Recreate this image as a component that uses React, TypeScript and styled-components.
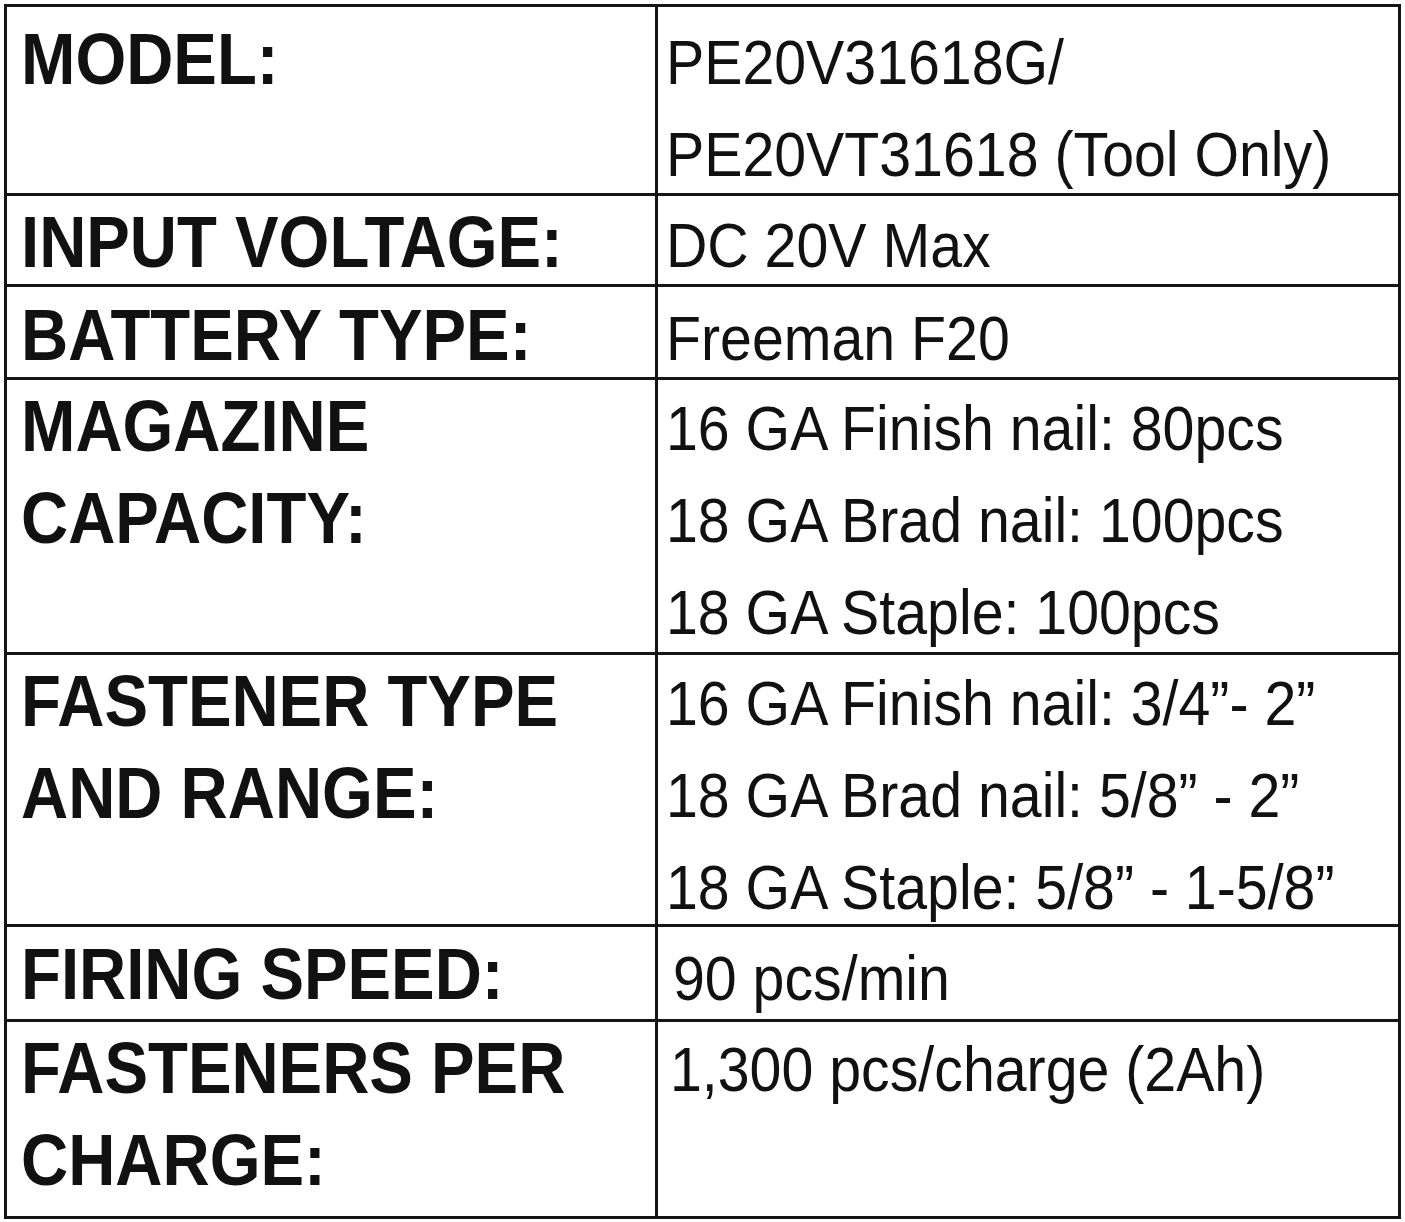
import styled, { createGlobalStyle } from "styled-components";

const GlobalStyle = createGlobalStyle`
  html, body {
    margin: 0;
    padding: 0;
    background: #ffffff;
  }
  body {
    font-family: "Liberation Sans", Arial, Helvetica, sans-serif;
    color: #111111;
  }
`;

// Spec rows; heights are the inner heights of each row in the sheet
const specs = [
  {
    label: ["MODEL:"],
    values: ["PE20V31618G/", "PE20VT31618 (Tool Only)"],
    height: 186,
    labelTop: 6,
    valueTop: 9,
    indent: 0,
  },
  {
    label: ["INPUT VOLTAGE:"],
    values: ["DC 20V Max"],
    height: 88,
    labelTop: 0,
    valueTop: 3,
    indent: 0,
  },
  {
    label: ["BATTERY TYPE:"],
    values: ["Freeman F20"],
    height: 90,
    labelTop: 2,
    valueTop: 5,
    indent: 0,
  },
  {
    label: ["MAGAZINE", "CAPACITY:"],
    values: [
      "16 GA Finish nail: 80pcs",
      "18 GA Brad nail: 100pcs",
      "18 GA Staple: 100pcs",
    ],
    height: 272,
    labelTop: 0,
    valueTop: 2,
    indent: 0,
  },
  {
    label: ["FASTENER TYPE", "AND RANGE:"],
    values: [
      "16 GA Finish nail: 3/4\u201D- 2\u201D",
      "18 GA Brad nail: 5/8\u201D - 2\u201D",
      "18 GA Staple: 5/8\u201D - 1-5/8\u201D",
    ],
    height: 269,
    labelTop: 0,
    valueTop: 2,
    indent: 0,
  },
  {
    label: ["FIRING SPEED:"],
    values: ["90 pcs/min"],
    height: 92,
    labelTop: 1,
    valueTop: 5,
    indent: 7,
  },
  {
    label: ["FASTENERS PER", "CHARGE:"],
    values: ["1,300 pcs/charge (2Ah)"],
    height: 194,
    labelTop: 0,
    valueTop: 1,
    indent: 4,
  },
];

const Page = styled.div`
  padding: 4px 0 0 4px;
`;

const Sheet = styled.div`
  width: 1397px;
  box-sizing: border-box;
  border: 3px solid #151515;
  display: flex;
  flex-direction: column;
`;

const Row = styled.div<{ $height: number }>`
  display: grid;
  grid-template-columns: 651px 1fr;
  height: ${({ $height }) => $height}px;

  & + & {
    border-top: 3px solid #151515;
  }
`;

const LabelCell = styled.div<{ $top: number }>`
  box-sizing: border-box;
  border-right: 3px solid #151515;
  padding: ${({ $top }) => $top}px 0 0 14px;
  display: flex;
  flex-direction: column;
`;

const ValueCell = styled.div<{ $top: number; $indent: number }>`
  padding: ${({ $top }) => $top}px 0 0 ${({ $indent }) => 8 + $indent}px;
  display: flex;
  flex-direction: column;
`;

const LabelLine = styled.span`
  display: block;
  font-size: 72px;
  font-weight: 700;
  line-height: 92px;
  white-space: nowrap;
  transform: scaleX(0.907);
  transform-origin: left center;
`;

const ValueLine = styled.span`
  display: block;
  font-size: 63px;
  font-weight: 400;
  line-height: 92px;
  white-space: nowrap;
  transform: scaleX(0.909);
  transform-origin: left center;
`;

export default function App() {
  return (
    <>
      <GlobalStyle />
      <Page>
        <Sheet>
          {specs.map((spec) => (
            <Row key={spec.label.join(" ")} $height={spec.height}>
              <LabelCell $top={spec.labelTop}>
                {spec.label.map((line) => (
                  <LabelLine key={line}>{line}</LabelLine>
                ))}
              </LabelCell>
              <ValueCell $top={spec.valueTop} $indent={spec.indent}>
                {spec.values.map((line) => (
                  <ValueLine key={line}>{line}</ValueLine>
                ))}
              </ValueCell>
            </Row>
          ))}
        </Sheet>
      </Page>
    </>
  );
}
